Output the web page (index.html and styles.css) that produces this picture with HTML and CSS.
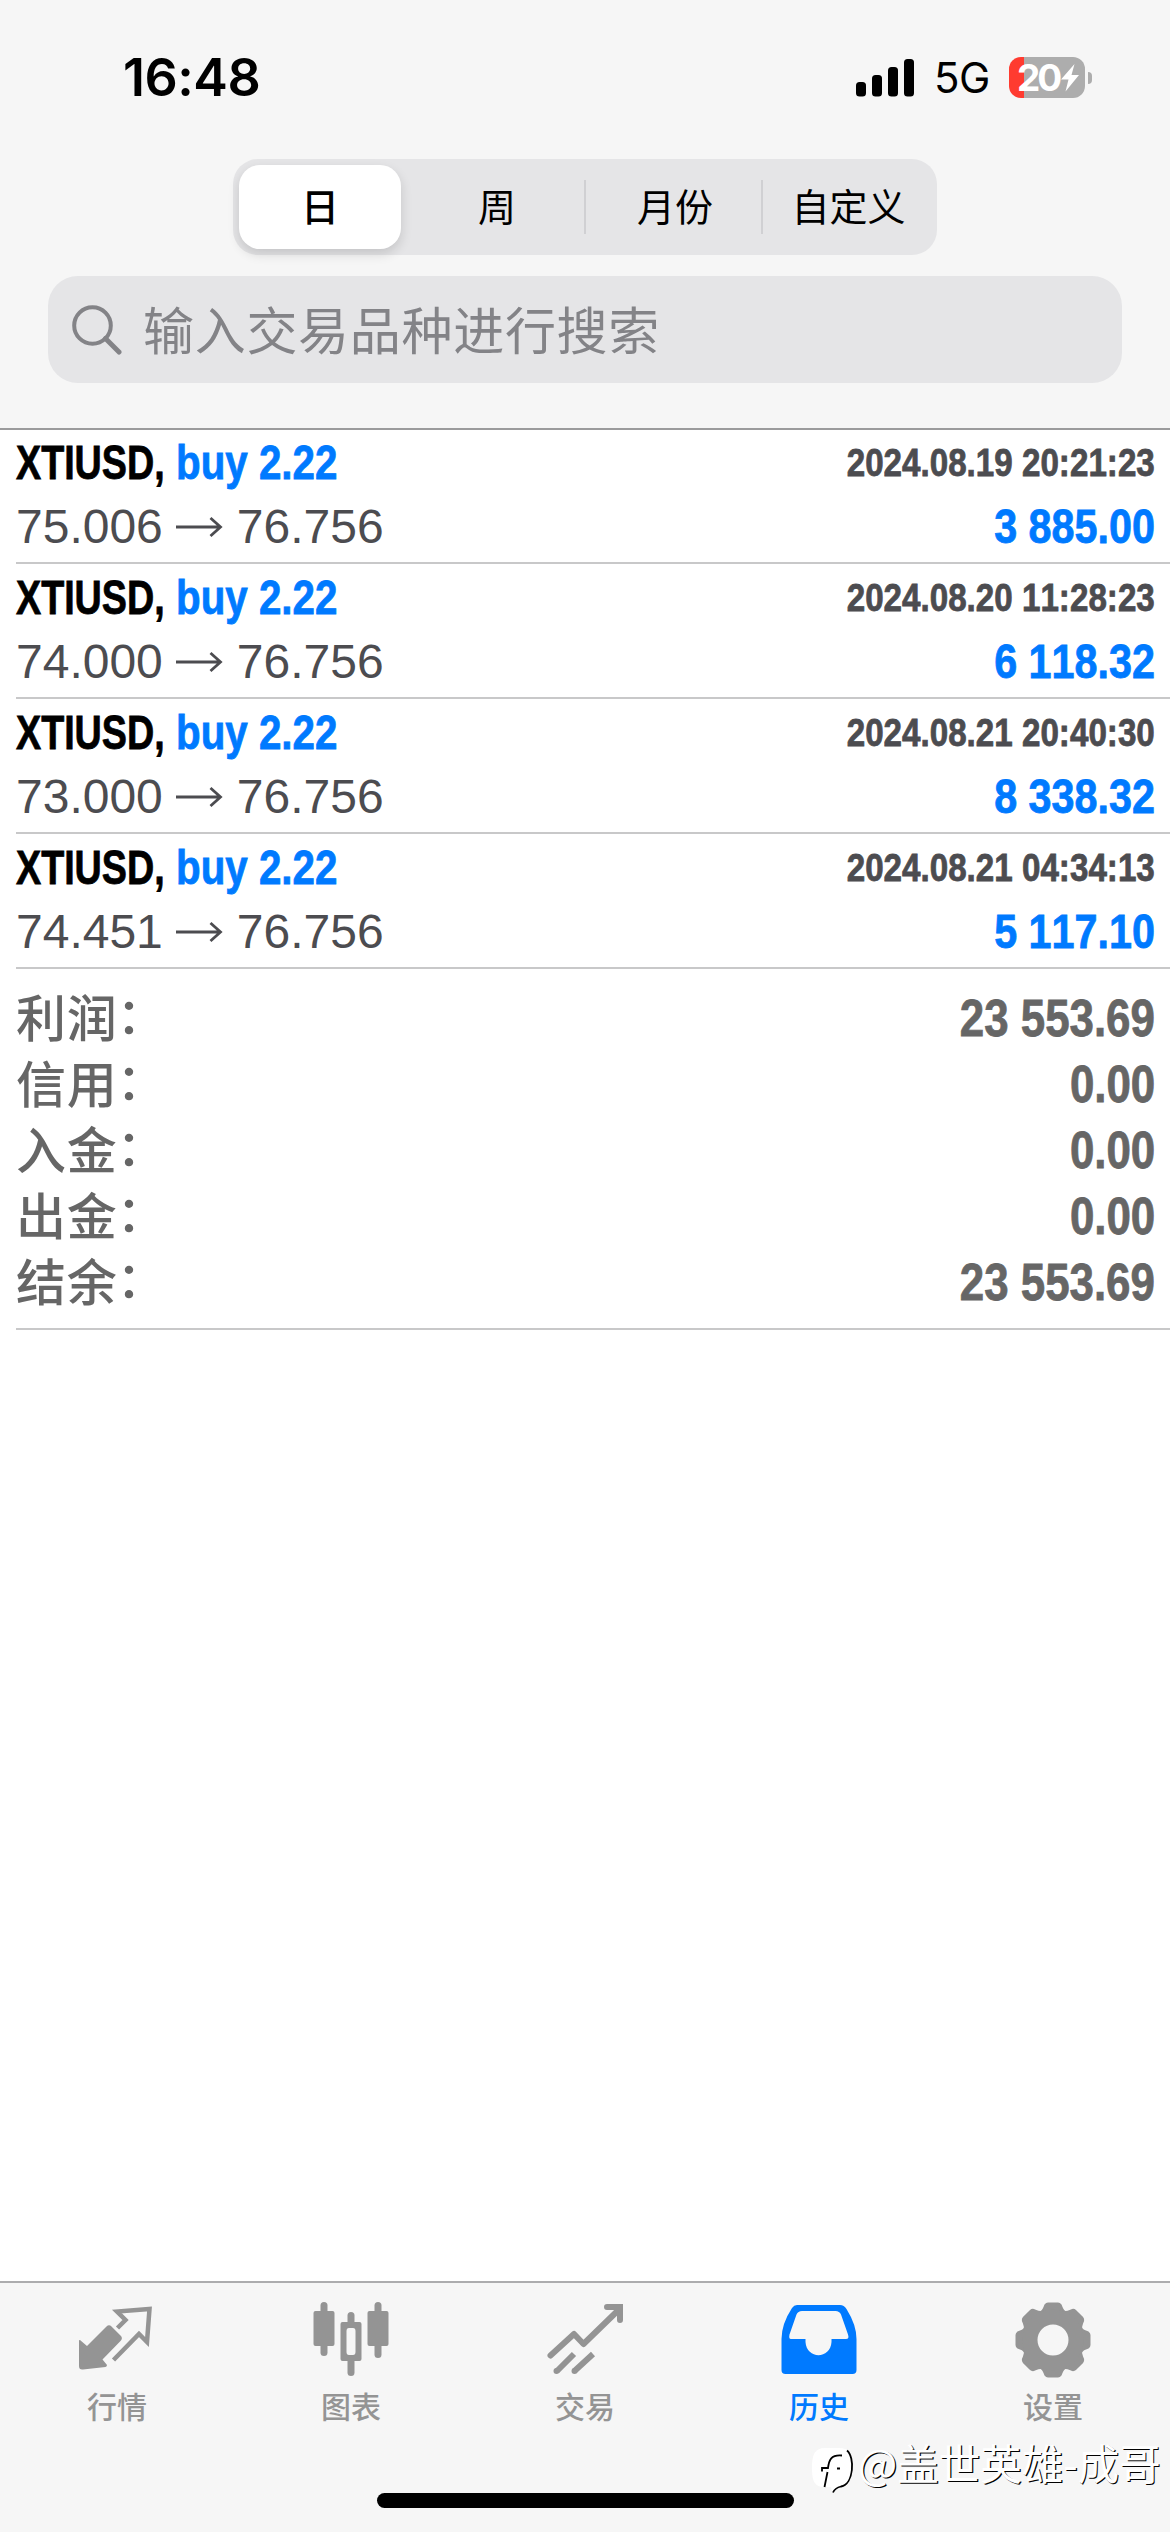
FILE: index.html
```html
<!DOCTYPE html>
<html lang="zh-CN">
<head>
<meta charset="utf-8">
<title>历史</title>
<link rel="stylesheet" href="styles.css">
</head>
<body>
<svg class="defs" aria-hidden="true"><symbol id="arrow" viewBox="0 0 48 24"><path d="M0 12H44M34.500 3L44.500 12L34.500 21" fill="none" stroke="currentColor" stroke-width="2.800"/></symbol></svg>
<div class="app">
  <header class="header">
    <div class="status">
      <span class="clock">16:48</span>
      <div class="status-right">
        <svg class="signal" viewBox="0 0 58 38"><rect x="0" y="23" width="10" height="14.500" rx="3.500"/><rect x="16" y="16" width="10" height="21.500" rx="3.500"/><rect x="32" y="8" width="10" height="29.500" rx="3.500"/><rect x="48" y="0" width="10" height="37.500" rx="3.500"/></svg>
        <span class="network">5G</span>
        <div class="battery">
          <span class="level">20</span>
          <svg class="bolt" viewBox="0 0 18 28"><path d="M13.500 0L0 15.500H7.500L4.500 27.500L18 11H10.500Z" fill="#fff"/></svg>
        </div>
        <span class="battery-cap"></span>
      </div>
    </div>
    <nav class="segments">
      <span class="segment active">日</span>
      <span class="segment">周</span>
      <span class="segment divided">月份</span>
      <span class="segment divided">自定义</span>
    </nav>
    <div class="search">
      <svg class="search-icon" viewBox="0 0 50 50"><circle cx="20.500" cy="20.500" r="18.300" fill="none" stroke="currentColor" stroke-width="4"/><path d="M33.500 33.500L47 47" stroke="currentColor" stroke-width="5" stroke-linecap="round"/></svg>
      <span class="placeholder">输入交易品种进行搜索</span>
    </div>
  </header>
  <main class="history">
    <section class="deal">
      <div class="line"><div class="title"><b class="symbol">XTIUSD,</b><b class="side">buy 2.22</b></div><b class="time">2024.08.19 20:21:23</b></div>
      <div class="line"><div class="prices"><span>75.006</span><svg class="arrow"><use href="#arrow"/></svg><span>76.756</span></div><b class="profit">3 885.00</b></div>
    </section>
    <section class="deal">
      <div class="line"><div class="title"><b class="symbol">XTIUSD,</b><b class="side">buy 2.22</b></div><b class="time">2024.08.20 11:28:23</b></div>
      <div class="line"><div class="prices"><span>74.000</span><svg class="arrow"><use href="#arrow"/></svg><span>76.756</span></div><b class="profit">6 118.32</b></div>
    </section>
    <section class="deal">
      <div class="line"><div class="title"><b class="symbol">XTIUSD,</b><b class="side">buy 2.22</b></div><b class="time">2024.08.21 20:40:30</b></div>
      <div class="line"><div class="prices"><span>73.000</span><svg class="arrow"><use href="#arrow"/></svg><span>76.756</span></div><b class="profit">8 338.32</b></div>
    </section>
    <section class="deal">
      <div class="line"><div class="title"><b class="symbol">XTIUSD,</b><b class="side">buy 2.22</b></div><b class="time">2024.08.21 04:34:13</b></div>
      <div class="line"><div class="prices"><span>74.451</span><svg class="arrow"><use href="#arrow"/></svg><span>76.756</span></div><b class="profit">5 117.10</b></div>
    </section>
    <section class="summary">
      <div class="total"><span class="label">利润<span class="colon">：</span></span><b class="sum">23 553.69</b></div>
      <div class="total"><span class="label">信用<span class="colon">：</span></span><b class="sum">0.00</b></div>
      <div class="total"><span class="label">入金<span class="colon">：</span></span><b class="sum">0.00</b></div>
      <div class="total"><span class="label">出金<span class="colon">：</span></span><b class="sum">0.00</b></div>
      <div class="total"><span class="label">结余<span class="colon">：</span></span><b class="sum">23 553.69</b></div>
    </section>
  </main>
  <footer class="footer">
    <nav class="tabs">
      <div class="tab"><svg class="icon" viewBox="0 0 76 76"><path d="M1 40L8 46L27.500 26.500Q30 24 32.500 26.500L42 36Q44 38.500 41.500 41L23.500 59.500L28 65Q28 66.500 26.500 67L4 69.500Q0 70 0 66V41Q0 39.500 1 40Z" fill="currentColor"/><path d="M38.500 28L46.500 20L38 11.500L70.500 9L68 42L60 34L34.500 60" fill="none" stroke="currentColor" stroke-width="4.500"/></svg><span>行情</span></div>
      <div class="tab"><svg class="icon" viewBox="0 0 76 76"><g fill="currentColor"><rect x="7.500" y="2" width="7" height="54" rx="3.500"/><rect x="0.500" y="11" width="21" height="35" rx="2"/><rect x="61.500" y="2" width="7" height="56" rx="3.500"/><rect x="54.500" y="11" width="21" height="35" rx="2"/><rect x="34.500" y="12" width="7" height="16" rx="3.500"/><rect x="34.500" y="56" width="7" height="20" rx="3.500"/><path fill-rule="evenodd" d="M29.500 22H46.500Q48.500 22 48.500 24V59Q48.500 61 46.500 61H29.500Q27.500 61 27.500 59V24Q27.500 22 29.500 22ZM36 28Q33.500 28 33.500 31V52Q33.500 55 36 55H40Q42.500 55 42.500 52V31Q42.500 28 40 28Z"/></g></svg><span>图表</span></div>
      <div class="tab"><svg class="icon" viewBox="0 0 76 76"><g fill="none" stroke="currentColor" stroke-width="6" stroke-linecap="round" stroke-linejoin="round"><path d="M3.500 55.500L27 34L36.500 44L72 9.500"/><path d="M60 7H73V20" stroke-linejoin="miter"/></g><path d="M10 71L27 54M27.500 71L46 54" fill="none" stroke="currentColor" stroke-width="6"/><circle cx="9.500" cy="71" r="3" fill="currentColor"/><circle cx="27.500" cy="71" r="3" fill="currentColor"/></svg><span>交易</span></div>
      <div class="tab selected"><svg class="icon" viewBox="0 0 76 76"><path fill="currentColor" fill-rule="evenodd" d="M16 5H59Q63 5 65.500 9Q75.500 25 75.500 39V70Q75.500 74 71.500 74H4.500Q0.500 74 0.500 70V39Q0.500 24 11 8Q13 5 16 5ZM21 11Q17 11 15.500 14.500L8.500 34.500Q7.500 39 10 39H24.500V42C25.500 59.500 49.500 59.500 50.500 42V39H65Q68.500 39 67 34.500L60 14.500Q58.500 11 54.500 11Z"/></svg><span>历史</span></div>
      <div class="tab"><svg class="icon" viewBox="-38 -40 76 76"><g fill="currentColor"><path id="tooth" d="M-14 -28Q-11 -29 -9.500 -33L-8.500 -35.500Q-7 -37.500 -5 -37.500H5Q7 -37.500 8.500 -35.500L9.500 -33Q11 -29 14 -28L0 -20Z"/><use href="#tooth" transform="rotate(45)"/><use href="#tooth" transform="rotate(90)"/><use href="#tooth" transform="rotate(135)"/><use href="#tooth" transform="rotate(180)"/><use href="#tooth" transform="rotate(225)"/><use href="#tooth" transform="rotate(270)"/><use href="#tooth" transform="rotate(315)"/></g><circle r="23" fill="none" stroke="currentColor" stroke-width="15"/></svg><span>设置</span></div>
    </nav>
    <div class="home-indicator"></div>
  </footer>
  <div class="watermark">
    <svg class="mark" viewBox="0 0 46 48"><path d="M13 0H27C37 0 40 5 40 18C40 32 37 39 28 39H26L20 44L19 39H13C3 39 0 34 0 20C0 6 3 0 13 0Z" fill="#fff"/><path d="M35 2.500C43 9 42 36 29 38.500Q23 40 21 44.500M30 7.500C19 6.500 17 12 16 20H10V23.500M15.500 24L12.500 39M25 20.500H28" fill="none" stroke="#000" stroke-width="1.800"/></svg>
    <span class="handle">@盖世英雄-成哥</span>
  </div>
</div>
</body>
</html>
```
FILE: styles.css
```css
* { box-sizing: border-box; }
body { margin: 0; background: #fff; font-family: "Liberation Sans", "Noto Sans CJK SC", sans-serif; }
.defs { position: absolute; width: 0; height: 0; }
.app { position: relative; width: 1170px; height: 2532px; display: flex; flex-direction: column; overflow: hidden; }

.header { height: 430px; background: #f6f6f6; border-bottom: 2px solid #9b9b9c; display: flex; flex-direction: column; align-items: center; }
.status { align-self: stretch; height: 159px; padding: 0 78px 4px 123px; display: flex; justify-content: space-between; align-items: center; font-family: Inter, sans-serif; }
.clock { font-size: 52px; font-weight: 600; line-height: 60px; letter-spacing: -0.5px; }
.status-right { display: flex; align-items: center; }
.signal { width: 58px; height: 38px; }
.network { margin-left: 20px; width: 59px; padding-top: 1px; font-size: 42px; line-height: 50px; letter-spacing: -0.5px; }
.battery { margin-left: 16px; width: 76px; height: 41px; border-radius: 12px; background: linear-gradient(90deg, #ff3b30 15px, #adadad 15px); display: flex; align-items: center; padding-left: 8px; }
.level { width: 44px; color: #fff; font-size: 37px; font-weight: 700; line-height: 41px; letter-spacing: -3px; }
.bolt { width: 18px; height: 28px; }
.battery-cap { width: 4px; height: 12px; margin-left: 3px; border-radius: 0 5px 5px 0; background: #adadad; }

.segments { width: 704px; height: 96px; padding: 6px; border-radius: 25px; background: #e5e5e7; display: grid; grid-template-columns: 162px 183px 177px 1fr; align-items: center; }
.segment { height: 84px; padding-bottom: 4px; display: flex; align-items: center; justify-content: center; font-size: 38px; line-height: 50px; color: #000; font-family: "Noto Sans CJK SC", sans-serif; }
.segment.active { border-radius: 21px; background: #fff; box-shadow: 0 5px 12px rgba(0, 0, 0, .14); font-weight: 500; }
.segment:nth-child(2) { padding-left: 9px; }
.divided { height: 54px; padding-left: 3px; border-left: 2px solid #d0d0d3; }
.search { width: 1074px; height: 107px; margin-top: 21px; padding: 0 24px; border-radius: 30px; background: #e5e5e7; color: #838387; display: flex; align-items: center; gap: 21px; font: 51px/70px "Noto Sans CJK SC", sans-serif; letter-spacing: .7px; }
.search-icon { width: 50px; height: 50px; }
.placeholder { padding-bottom: 4px; }

.history { flex: 1; }
.deal { height: 135px; margin-left: 16px; padding: 2px 15px 0 0; border-bottom: 2px solid #c8c8c9; }
.deal:first-child { height: 134px; padding-top: 1px; }
.line { height: 64px; display: flex; align-items: center; justify-content: space-between; font-size: 48px; line-height: 60px; white-space: nowrap; font-kerning: none; }
.line b, .sum { -webkit-text-stroke: .8px currentColor; }
.title { display: flex; }
.symbol { width: 160px; transform: scaleX(.785); transform-origin: left; color: #000; }
.side { width: 170px; transform: scaleX(.84); transform-origin: left; color: #007aff; }
.time { padding-bottom: 2px; font-size: 39.500px; color: #4c4c50; transform: scaleX(.84); transform-origin: right; }
.profit { color: #007aff; transform: scaleX(.86); transform-origin: right; }
.prices { display: flex; align-items: center; gap: 13px; color: #4c4c50; }
.arrow { width: 48px; height: 24px; }
.summary { height: 361px; margin-left: 16px; padding: 15px 15px 0 0; border-bottom: 2px solid #c8c8c9; color: #666; }
.total { height: 66px; display: flex; align-items: center; justify-content: space-between; line-height: 66px; white-space: nowrap; }
.label { height: 66px; margin-bottom: 4px; font: 500 50px/66px "Noto Sans CJK SC", sans-serif; letter-spacing: .8px; }
.colon { line-height: 1; margin-left: -1px; vertical-align: 3px; }
.sum { padding-top: 3px; font-size: 51px; transform: scaleX(.86); transform-origin: right; }

.footer { height: 251px; background: #f6f6f6; border-top: 2px solid #acacae; display: flex; flex-direction: column; align-items: center; }
.tabs { align-self: stretch; height: 210px; display: grid; grid-template-columns: repeat(5, 1fr); }
.tab { display: flex; flex-direction: column; align-items: center; padding-top: 17px; color: #949494; font: 500 30px/40px "Noto Sans CJK SC", sans-serif; }
.tab span { margin-top: 9px; }
.icon { width: 76px; height: 76px; overflow: visible; }
.selected { color: #007aff; }
.home-indicator { width: 417px; height: 15px; border-radius: 8px; background: #000; }
.watermark { position: absolute; left: 812px; top: 2434px; display: flex; align-items: center; color: #fff; font: 41.500px/50px "Noto Sans CJK SC", sans-serif; text-shadow: 1.200px 1.200px 0 #000; white-space: nowrap; }
.mark { width: 46px; height: 48px; margin-top: 14px; }
.handle { padding-bottom: 7px; }
```
